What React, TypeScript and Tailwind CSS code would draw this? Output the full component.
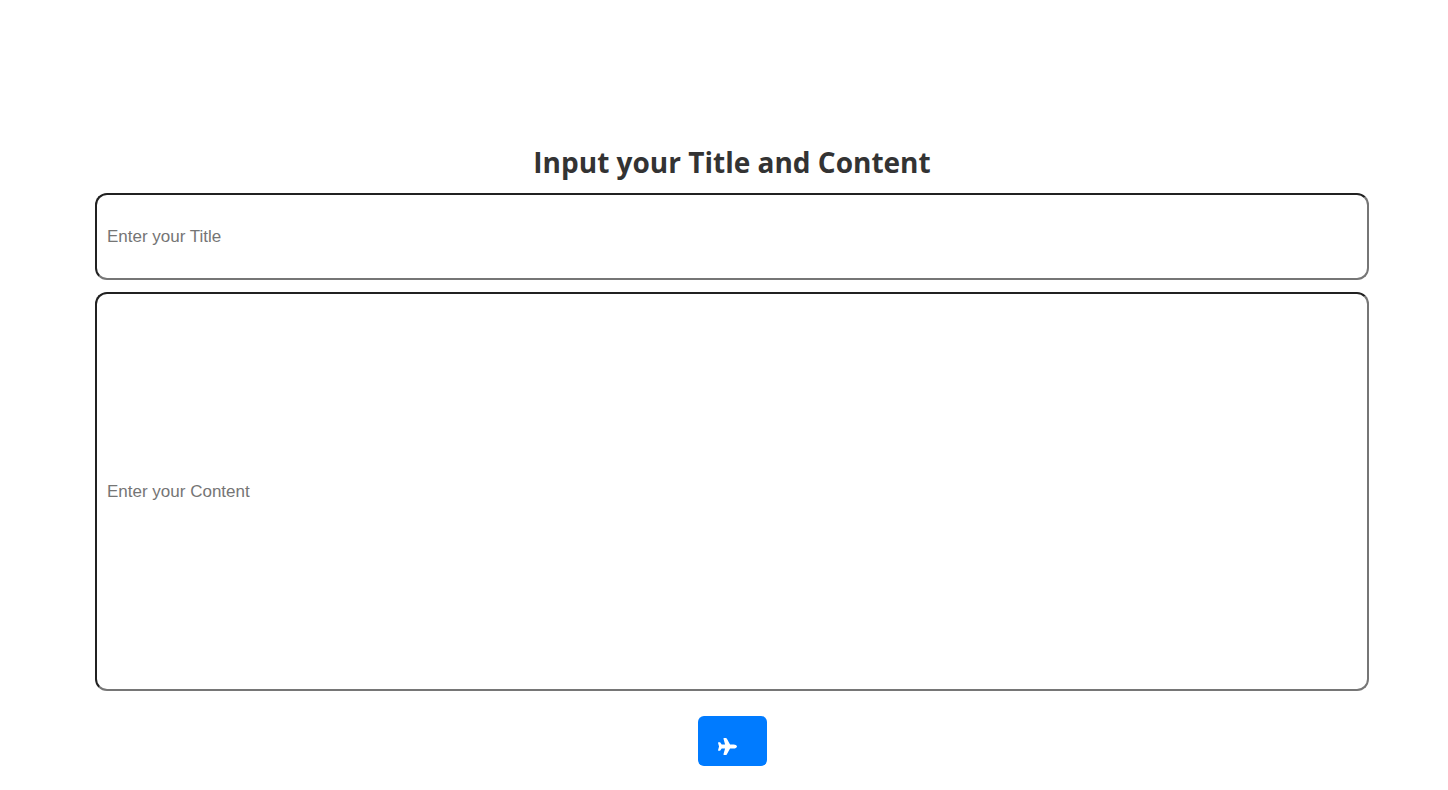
import { FaPlane } from "react-icons/fa6";

export default function App() {
  return (
    <main className="min-h-screen bg-white pt-36 pr-[79px] pb-6 pl-[95px]">
      <form className="flex flex-col items-center" onSubmit={(e) => e.preventDefault()}>
        <h1 className="mb-[13px] font-['Open_Sans',sans-serif] text-[28px] leading-9 font-bold text-[#333333]">
          Input your Title and Content
        </h1>
        <input
          type="text"
          aria-label="Title"
          placeholder="Enter your Title"
          className="mb-3 h-[87px] w-full rounded-xl border-2 border-t-[#212121] border-r-[#767676] border-b-[#767676] border-l-[#212121] px-[10px] font-['Liberation_Sans',sans-serif] text-[17px] placeholder:text-[#757575]"
        />
        <input
          type="text"
          aria-label="Content"
          placeholder="Enter your Content"
          className="mb-[25px] h-[399px] w-full rounded-xl border-2 border-t-[#212121] border-r-[#767676] border-b-[#767676] border-l-[#212121] px-[10px] font-['Liberation_Sans',sans-serif] text-[17px] placeholder:text-[#757575]"
        />
        <button
          type="submit"
          aria-label="Send"
          className="flex h-[50px] w-[69px] items-end rounded-md bg-[#007bff] pb-[10px] pl-5 text-white"
        >
          <FaPlane size={19} />
        </button>
      </form>
    </main>
  );
}
